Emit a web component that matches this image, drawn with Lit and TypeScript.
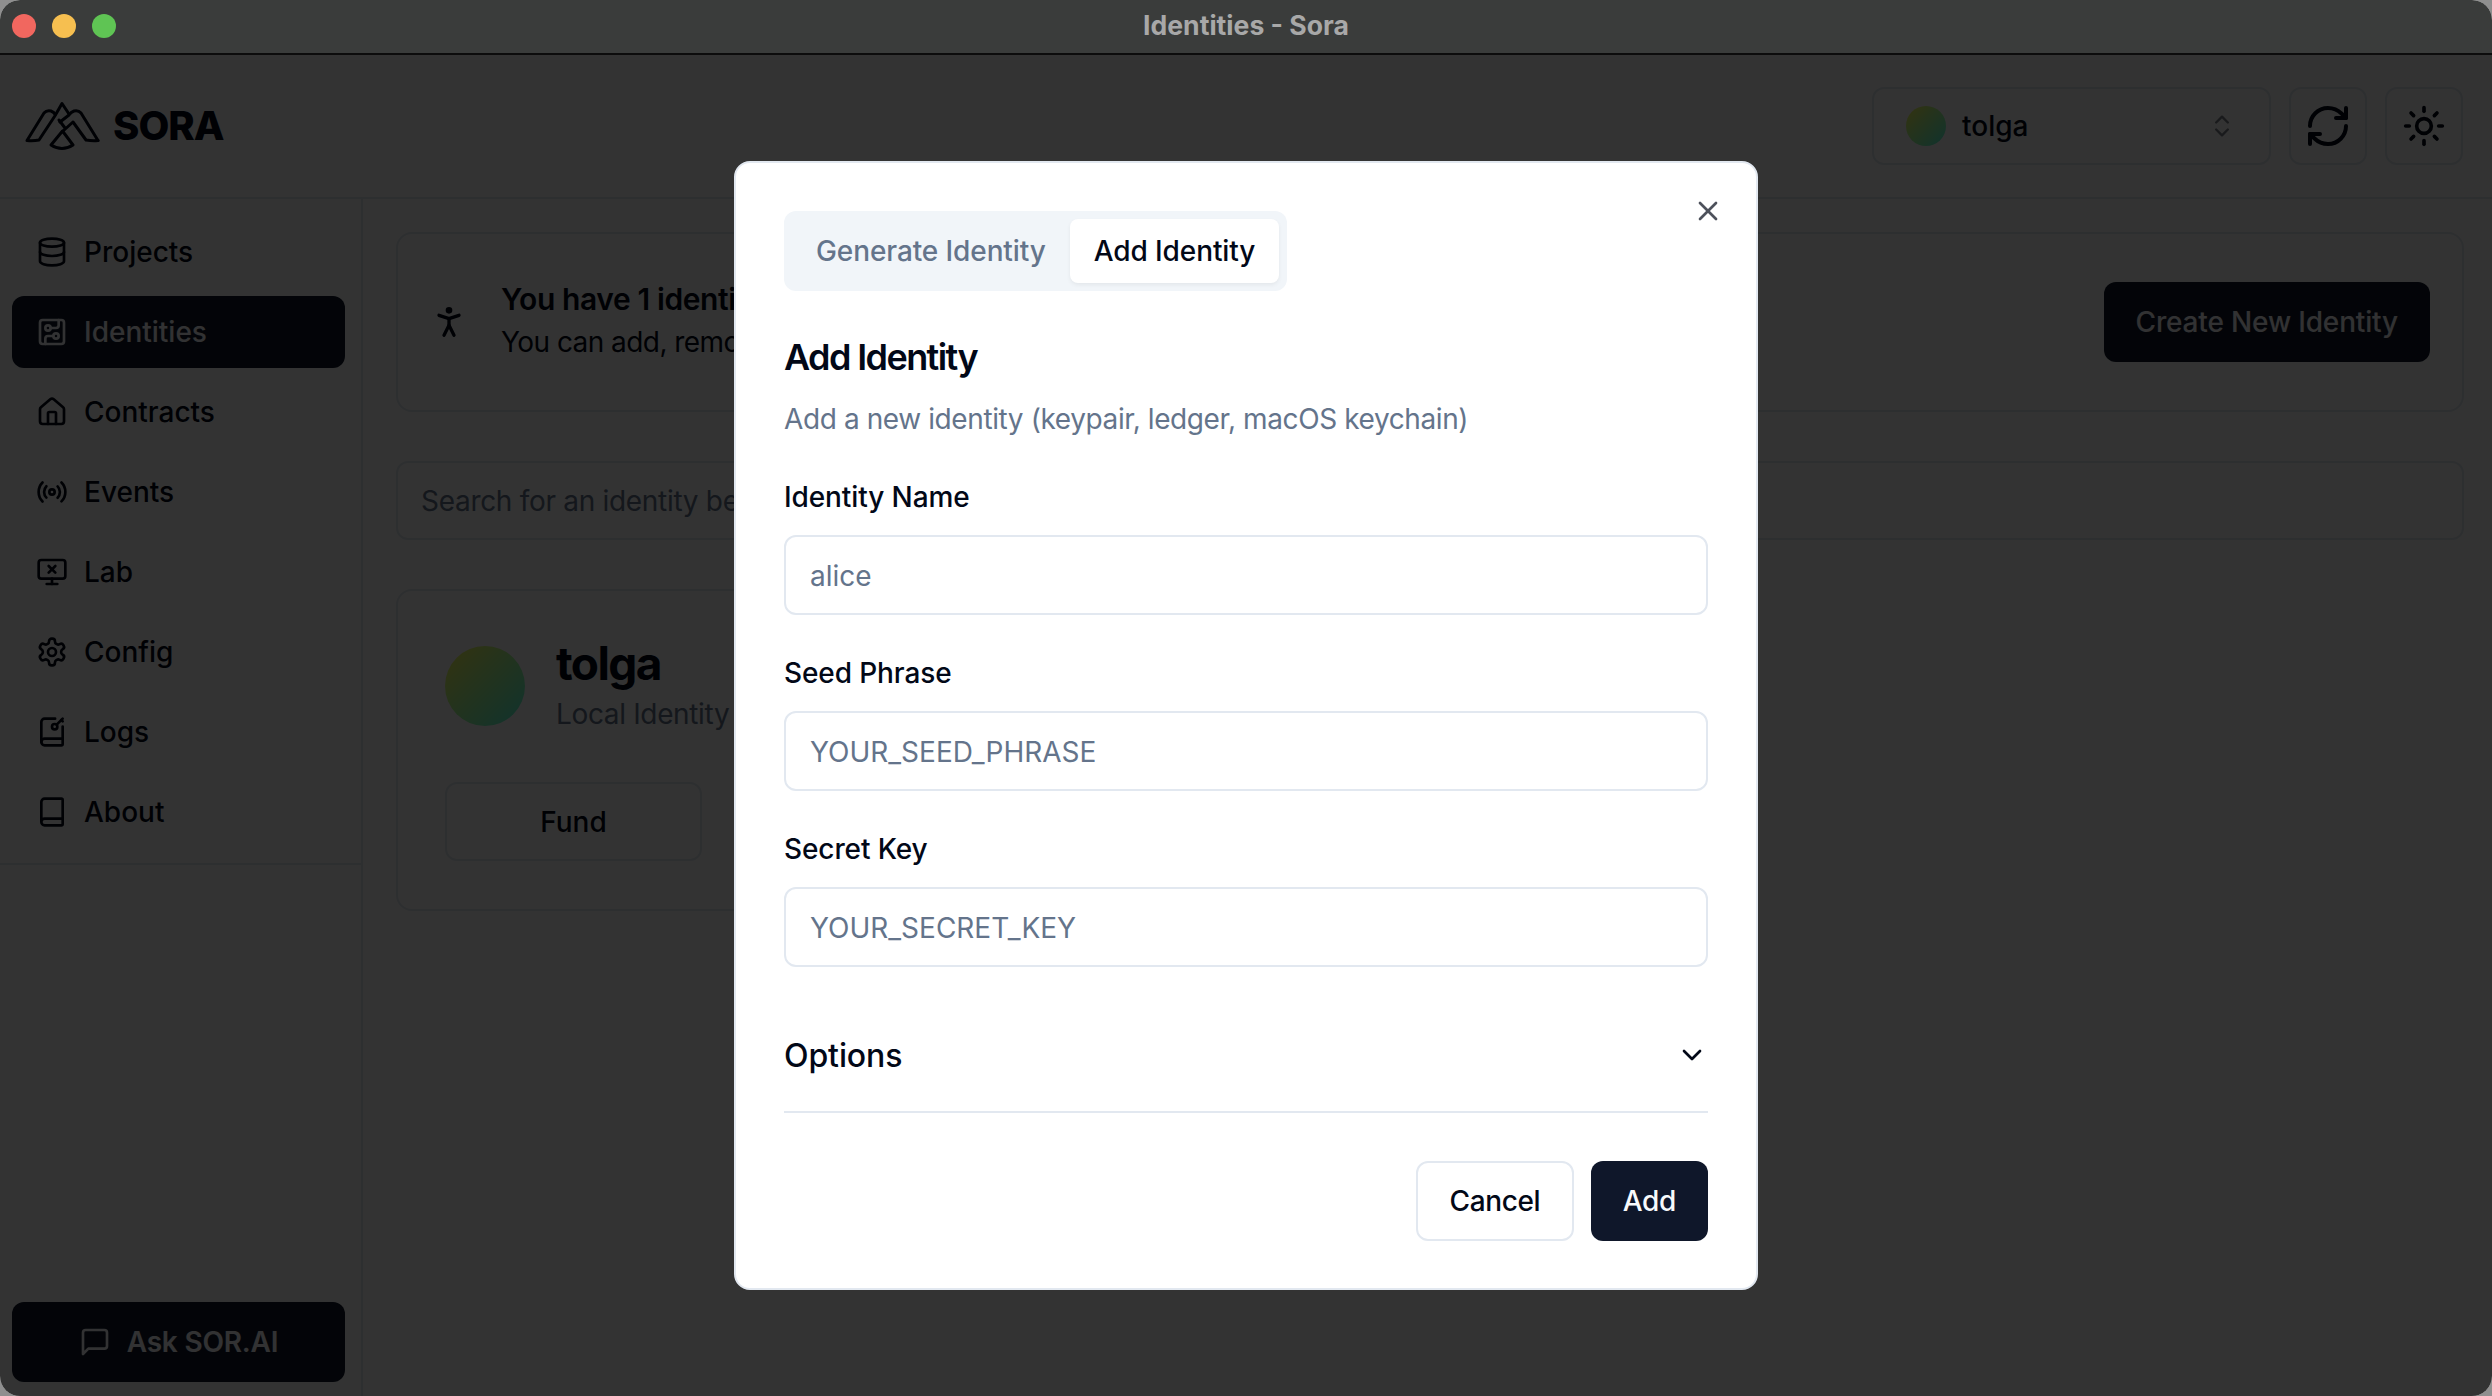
import { LitElement, html, css, svg } from "lit";
import { customElement } from "lit/decorators.js";

const ic = (size: number, body: unknown, sw = 2) => html`<svg class="ic" width=${size} height=${size} viewBox="0 0 24 24" fill="none" stroke="currentColor" stroke-width=${sw} stroke-linecap="round" stroke-linejoin="round">${body}</svg>`;

const I = {
  database: svg`<ellipse cx="12" cy="5" rx="9" ry="3"/><path d="M3 5V19A9 3 0 0 0 21 19V5"/><path d="M3 12A9 3 0 0 0 21 12"/>`,
  circuit: svg`<rect width="18" height="18" x="3" y="3" rx="2"/><path d="M11 9h4a2 2 0 0 0 2-2V3"/><circle cx="9" cy="9" r="2"/><path d="M7 21v-4a2 2 0 0 1 2-2h4"/><circle cx="15" cy="15" r="2"/>`,
  home: svg`<path d="M15 21v-8a1 1 0 0 0-1-1h-4a1 1 0 0 0-1 1v8"/><path d="M3 10a2 2 0 0 1 .709-1.528l7-5.999a2 2 0 0 1 2.582 0l7 5.999A2 2 0 0 1 21 10v9a2 2 0 0 1-2 2H5a2 2 0 0 1-2-2z"/>`,
  radio: svg`<path d="M4.9 19.1C1 15.2 1 8.8 4.9 4.9"/><path d="M7.8 16.2c-2.3-2.3-2.3-6.1 0-8.5"/><circle cx="12" cy="12" r="2"/><path d="M16.2 7.8c2.3 2.3 2.3 6.1 0 8.5"/><path d="M19.1 4.9C23 8.8 23 15.1 19.1 19"/>`,
  monitorX: svg`<path d="m14.5 12.5-5-5"/><path d="m9.5 12.5 5-5"/><rect width="20" height="14" x="2" y="3" rx="2"/><path d="M12 17v4"/><path d="M8 21h8"/>`,
  settings: svg`<path d="M12.22 2h-.44a2 2 0 0 0-2 2v.18a2 2 0 0 1-1 1.73l-.43.25a2 2 0 0 1-2 0l-.15-.08a2 2 0 0 0-2.73.73l-.22.38a2 2 0 0 0 .73 2.73l.15.1a2 2 0 0 1 1 1.72v.51a2 2 0 0 1-1 1.74l-.15.09a2 2 0 0 0-.73 2.73l.22.38a2 2 0 0 0 2.73.73l.15-.08a2 2 0 0 1 2 0l.43.25a2 2 0 0 1 1 1.73V20a2 2 0 0 0 2 2h.44a2 2 0 0 0 2-2v-.18a2 2 0 0 1 1-1.73l.43-.25a2 2 0 0 1 2 0l.15.08a2 2 0 0 0 2.73-.73l.22-.39a2 2 0 0 0-.73-2.73l-.15-.08a2 2 0 0 1-1-1.74v-.5a2 2 0 0 1 1-1.74l.15-.09a2 2 0 0 0 .73-2.73l-.22-.38a2 2 0 0 0-2.73-.73l-.15.08a2 2 0 0 1-2 0l-.43-.25a2 2 0 0 1-1-1.73V4a2 2 0 0 0-2-2z"/><circle cx="12" cy="12" r="3"/>`,
  bookKey: svg`<path d="m19 3 1 1"/><path d="m20 2-4.5 4.5"/><path d="M20 7.898V21a1 1 0 0 1-1 1H6.5a1 1 0 0 1 0-5H20"/><path d="M4 19.5v-15A2.5 2.5 0 0 1 6.5 2h7.844"/><circle cx="14" cy="8" r="2"/>`,
  book: svg`<path d="M4 19.5v-15A2.5 2.5 0 0 1 6.5 2H19a1 1 0 0 1 1 1v18a1 1 0 0 1-1 1H6.5a1 1 0 0 1 0-5H20"/>`,
  message: svg`<path d="M21 15a2 2 0 0 1-2 2H7l-4 4V5a2 2 0 0 1 2-2h14a2 2 0 0 1 2 2z"/>`,
  person: svg`<circle cx="12" cy="5" r="1"/><path d="m9 20 3-6 3 6"/><path d="m6 8 6 2 6-2"/><path d="M12 10v4"/>`,
  refresh: svg`<path d="M3 12a9 9 0 0 1 9-9 9.75 9.75 0 0 1 6.74 2.74L21 8"/><path d="M21 3v5h-5"/><path d="M21 12a9 9 0 0 1-9 9 9.75 9.75 0 0 1-6.74-2.74L3 16"/><path d="M8 16H3v5"/>`,
  sun: svg`<circle cx="12" cy="12" r="4"/><path d="M12 2v2"/><path d="M12 20v2"/><path d="m4.93 4.93 1.41 1.41"/><path d="m17.66 17.66 1.41 1.41"/><path d="M2 12h2"/><path d="M20 12h2"/><path d="m6.34 17.66-1.41 1.41"/><path d="m19.07 4.93-1.41 1.41"/>`,
  updown: svg`<path d="m7 15 5 5 5-5"/><path d="m7 9 5-5 5 5"/>`,
  x: svg`<path d="M18 6 6 18"/><path d="m6 6 12 12"/>`,
  down: svg`<path d="m6 9 6 6 6-6"/>`,
};

const nav: [string, unknown][] = [
  ["Projects", I.database],
  ["Identities", I.circuit],
  ["Contracts", I.home],
  ["Events", I.radio],
  ["Lab", I.monitorX],
  ["Config", I.settings],
  ["Logs", I.bookKey],
  ["About", I.book],
];

@customElement("app-root")
export class AppRoot extends LitElement {
  static styles = css`
    :host { display: block; width: 2492px; height: 1396px; background: #8f8f8f; font-family: Inter, "Noto Sans", sans-serif; color: #020817; }
    * { box-sizing: border-box; }
    .ic { display: block; flex: none; }
    .window { width: 100%; height: 100%; border-radius: 20px; overflow: hidden; display: flex; flex-direction: column; background: #fff; }
    .titlebar { height: 55px; flex: none; background: #3a3c3b; border-bottom: 2px solid #0c0c0c; display: flex; align-items: center; justify-content: center; position: relative; padding-bottom: 4px; }
    .lights { position: absolute; left: 12px; top: 14px; display: flex; gap: 16px; }
    .light { width: 24px; height: 24px; border-radius: 50%; }
    .red { background: #f1675f; } .yellow { background: #f6bf50; } .green { background: #5fc454; }
    .wintitle { font-size: 26.6px; font-weight: 700; color: #a8a8a8; }

    .webview { flex: 1; min-height: 0; position: relative; display: flex; flex-direction: column; }
    .overlay { position: absolute; inset: 0; background: rgba(0,0,0,.8); display: flex; align-items: center; justify-content: center; }

    .header { height: 144px; flex: none; border-bottom: 2px solid #e2e8f0; display: flex; align-items: center; padding: 0 29px 0 25px; }
    .logo { display: flex; align-items: center; gap: 13px; margin-right: auto; }
    .logotext { font-size: 40px; font-weight: 800; letter-spacing: -1px; line-height: 48px; }
    .select { width: 399px; height: 78px; border: 2px solid #e2e8f0; border-radius: 12px; display: flex; align-items: center; padding: 0 33px 0 32px; font-size: 28px; font-weight: 500; }
    .avatar { border-radius: 50%; background: linear-gradient(135deg, #ffff50, #50ffe0); flex: none; }
    .avatar.sm { width: 40px; height: 40px; margin-right: 16px; }
    .select .updown { margin-left: auto; opacity: .5; }
    .iconbtn { width: 78px; height: 78px; border: 2px solid #e2e8f0; border-radius: 12px; display: flex; align-items: center; justify-content: center; margin-left: 18px; }

    .body { flex: 1; min-height: 0; display: flex; }
    .sidebar { width: 363px; flex: none; border-right: 2px solid #e2e8f0; display: flex; flex-direction: column; }
    .nav { padding: 17px 16px 15px 12px; border-bottom: 2px solid #e2e8f0; display: flex; flex-direction: column; gap: 8px; }
    .nav a { height: 72px; border-radius: 12px; display: flex; align-items: center; gap: 16px; padding-left: 24px; font-size: 28px; font-weight: 500; padding-bottom: 1px; }
    .nav a .ic { margin-top: 1px; }
    .nav a.active { background: #0f172a; color: #f8fafc; }
    .ask { margin: auto 16px 14px 12px; height: 80px; border-radius: 12px; background: #0f172a; color: #f8fafc; display: flex; align-items: center; justify-content: center; gap: 16px; font-size: 28px; font-weight: 600; letter-spacing: -.2px; }

    .main { flex: 1; min-width: 0; padding: 33px 28px 0 33px; display: flex; flex-direction: column; gap: 49px; }
    .banner { height: 180px; border: 2px solid #e2e8f0; border-radius: 16px; display: flex; align-items: center; padding: 0 32px 0 31px; }
    .banner .txt { margin-left: 32px; margin-right: auto; padding-bottom: 3px; }
    .banner h2 { margin: 0; font-size: 30px; line-height: 40px; font-weight: 600; letter-spacing: -.4px; }
    .banner p { margin: 3px 0 0; font-size: 28px; line-height: 40px; letter-spacing: -.55px; }
    .primary { height: 80px; background: #0f172a; color: #f8fafc; border-radius: 12px; display: flex; align-items: center; justify-content: center; font-size: 28px; font-weight: 500; padding: 0 32px; letter-spacing: -.16px; }
    .search { height: 79px; border: 2px solid #e2e8f0; border-radius: 12px; display: flex; align-items: center; padding: 0 23px; font-size: 28px; color: #64748b; letter-spacing: -.3px; }
    .cards { display: grid; grid-template-columns: repeat(3, 1fr); gap: 32px; }
    .card { height: 322px; border: 2px solid #e2e8f0; border-radius: 16px; padding: 47px 47px 0; }
    .who { display: flex; align-items: center; gap: 31px; }
    .avatar.lg { width: 80px; height: 80px; }
    .who h3 { margin: 0; font-size: 46px; line-height: 50px; font-weight: 700; letter-spacing: -1.6px; }
    .who p { margin: 6px 0 0; font-size: 28px; line-height: 40px; color: #64748b; letter-spacing: -.35px; }
    .outline { width: 257px; height: 79px; border: 2px solid #e2e8f0; border-radius: 12px; display: flex; align-items: center; justify-content: center; font-size: 28px; font-weight: 500; margin-top: 48px; }

    .modal { position: relative; width: 1024px; background: #fff; border: 2px solid #e2e8f0; border-radius: 16px; padding: 48px 48px 47px; display: flex; flex-direction: column; }
    .close { position: absolute; right: 32px; top: 32px; color: #020817; opacity: .7; }
    .tabs { align-self: flex-start; height: 80px; background: #f1f5f9; border-radius: 12px; padding: 8px; display: flex; font-size: 28px; font-weight: 500; color: #64748b; letter-spacing: -.1px; }
    .tab { padding: 0 24px; display: flex; align-items: center; border-radius: 8px; }
    .tab.on { background: #fff; color: #020817; box-shadow: 0 2px 4px rgba(0,0,0,.06); }
    .modal h1 { margin: 48px 0 0; font-size: 36px; line-height: 36px; font-weight: 600; letter-spacing: -1.6px; }
    .desc { margin: 24px 0 0; font-size: 28px; line-height: 40px; color: #64748b; letter-spacing: -.4px; }
    .label { margin-top: 44px; font-size: 28px; line-height: 28px; font-weight: 500; letter-spacing: -.1px; }
    .input { margin-top: 24px; height: 80px; border: 2px solid #e2e8f0; border-radius: 12px; display: flex; align-items: center; padding: 2px 24px 0; font-size: 28px; color: #64748b; }
    .options { margin-top: 34px; height: 112px; border-bottom: 2px solid #e2e8f0; display: flex; align-items: center; justify-content: space-between; font-size: 32px; font-weight: 500; padding-bottom: 2px; letter-spacing: -.1px; }
    .footer { margin-top: 48px; display: flex; justify-content: flex-end; gap: 17px; }
    .btn { height: 80px; border-radius: 12px; display: flex; align-items: center; font-size: 28px; font-weight: 500; padding: 0 32px; letter-spacing: -.3px; }
    .btn.cancel { border: 2px solid #e2e8f0; padding: 0 31.500px; letter-spacing: -.4px; }
    .btn.add { background: #0f172a; color: #f8fafc; }
  `;

  render() {
    return html`
      <div class="window">
        <div class="titlebar">
          <div class="lights"><span class="light red"></span><span class="light yellow"></span><span class="light green"></span></div>
          <span class="wintitle">Identities - Sora</span>
        </div>
        <div class="webview">
          <div class="header">
            <div class="logo">
              <svg width="75" height="52" viewBox="24 100 75 52" fill="none" stroke="currentColor" stroke-width="3" stroke-linejoin="round" stroke-linecap="round">
                <path d="M26 140.5 43 113q2.500-3 7-2 3 1 4.500 4L38 140q-5 1-12 .5Z"/>
                <path d="M55 114 61 103.500 68 114"/>
                <path d="M97 140.500 80 113q-2.500-3-7-2-3 1-5 4L59 122"/>
                <path d="M97 140.500q-6 .5-12-.5L72 122 62 131"/>
                <path d="M58 120 64 128"/>
                <path d="M61.500 131 72 145q-11 7-22 0Z"/>
              </svg>
              <span class="logotext">SORA</span>
            </div>
            <div class="select">
              <span class="avatar sm"></span>tolga
              <span class="updown">${ic(28, I.updown)}</span>
            </div>
            <div class="iconbtn">${ic(48, I.refresh)}</div>
            <div class="iconbtn">${ic(44, I.sun)}</div>
          </div>
          <div class="body">
            <div class="sidebar">
              <div class="nav">
                ${nav.map(([t, i]) => html`<a class=${t === "Identities" ? "active" : ""}>${ic(32, i)}<span>${t}</span></a>`)}
              </div>
              <div class="ask">${ic(32, I.message)}<span>Ask SOR.AI</span></div>
            </div>
            <div class="main">
              <div class="banner">
                ${ic(40, I.person)}
                <div class="txt">
                  <h2>You have 1 identity</h2>
                  <p>You can add, remove</p>
                </div>
                <div class="primary">Create New Identity</div>
              </div>
              <div class="search">Search for an identity below</div>
              <div class="cards">
                <div class="card">
                  <div class="who">
                    <span class="avatar lg"></span>
                    <div><h3>tolga</h3><p>Local Identity</p></div>
                  </div>
                  <div class="outline">Fund</div>
                </div>
              </div>
            </div>
          </div>
          <div class="overlay">
            <div class="modal">
              <span class="close">${ic(32, I.x)}</span>
              <div class="tabs"><div class="tab">Generate Identity</div><div class="tab on">Add Identity</div></div>
              <h1>Add Identity</h1>
              <p class="desc">Add a new identity (keypair, ledger, macOS keychain)</p>
              <div class="label">Identity Name</div>
              <div class="input">alice</div>
              <div class="label">Seed Phrase</div>
              <div class="input">YOUR_SEED_PHRASE</div>
              <div class="label">Secret Key</div>
              <div class="input">YOUR_SECRET_KEY</div>
              <div class="options"><span>Options</span>${ic(32, I.down)}</div>
              <div class="footer"><div class="btn cancel">Cancel</div><div class="btn add">Add</div></div>
            </div>
          </div>
        </div>
      </div>
    `;
  }
}
